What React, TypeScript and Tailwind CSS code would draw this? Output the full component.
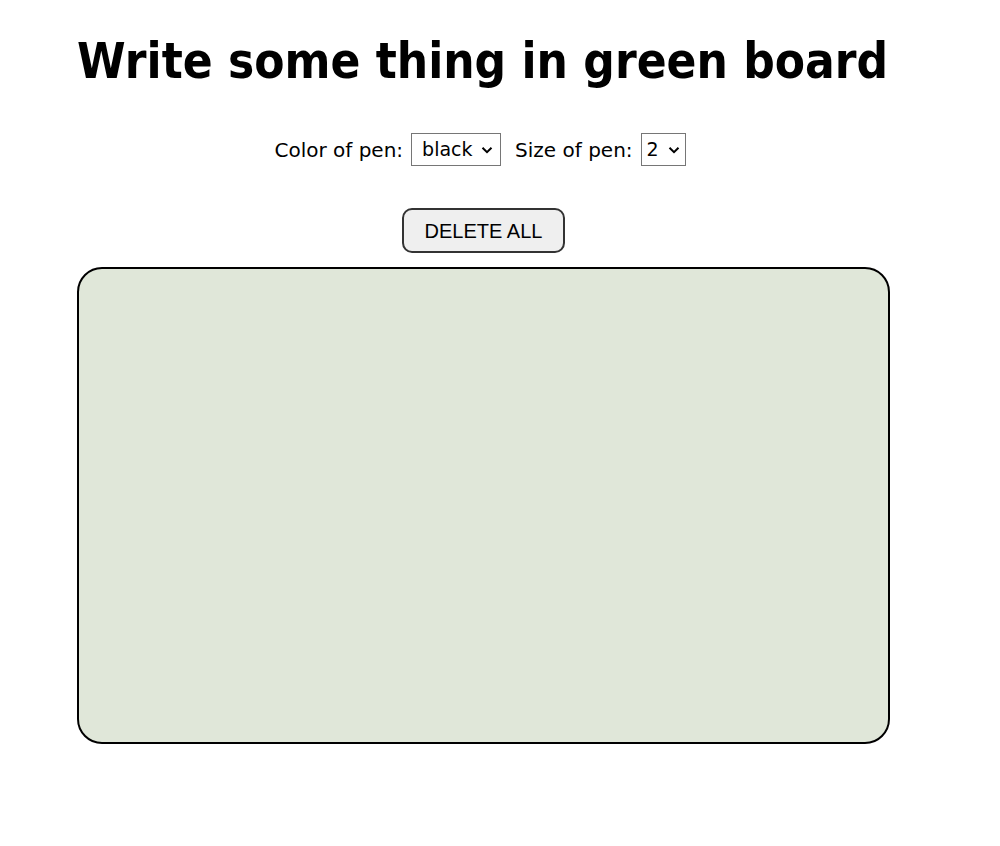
export default function App() {
  return (
    <div className="w-[1000px] min-h-[846px] bg-white text-black">
      <div className="ml-[77px] w-[813px] flex flex-col items-center">
        <h1 className="mt-[33px] w-full whitespace-nowrap text-left text-[49px] font-bold leading-[58px] font-['DejaVu_Sans_Condensed','DejaVu_Sans',sans-serif]">
          Write some thing in green board
        </h1>
        <div className="mt-[42px] mr-[7px] flex items-center gap-[8px] text-[20px] font-['DejaVu_Sans',sans-serif]">
          <span>Color of pen:</span>
          <div className="flex h-[33px] w-[90px] items-center justify-between border border-[#767676] bg-white pl-[10px] pr-[7px] text-[19px]">
            <span>black</span>
            <Chevron />
          </div>
          <span className="ml-[6px]">Size of pen:</span>
          <div className="flex h-[33px] w-[45px] items-center justify-between border border-[#767676] bg-white pl-[5px] pr-[5px] text-[19px]">
            <span>2</span>
            <Chevron />
          </div>
        </div>
        <button className="mt-[42px] h-[45px] w-[163px] rounded-[10px] border-2 border-[#333] bg-[#efefef] text-[20px] font-['Liberation_Sans',sans-serif]">
          DELETE ALL
        </button>
        <div className="mt-[14px] h-[477px] w-full rounded-[25px] border-2 border-black bg-[#e0e7d9]" />
      </div>
    </div>
  );
}

function Chevron() {
  return (
    <svg width="12" height="8" viewBox="0 0 12 8" fill="none">
      <path d="M1.5 1.8l4.5 4.4 4.5-4.4" stroke="#000" strokeWidth="2" />
    </svg>
  );
}
